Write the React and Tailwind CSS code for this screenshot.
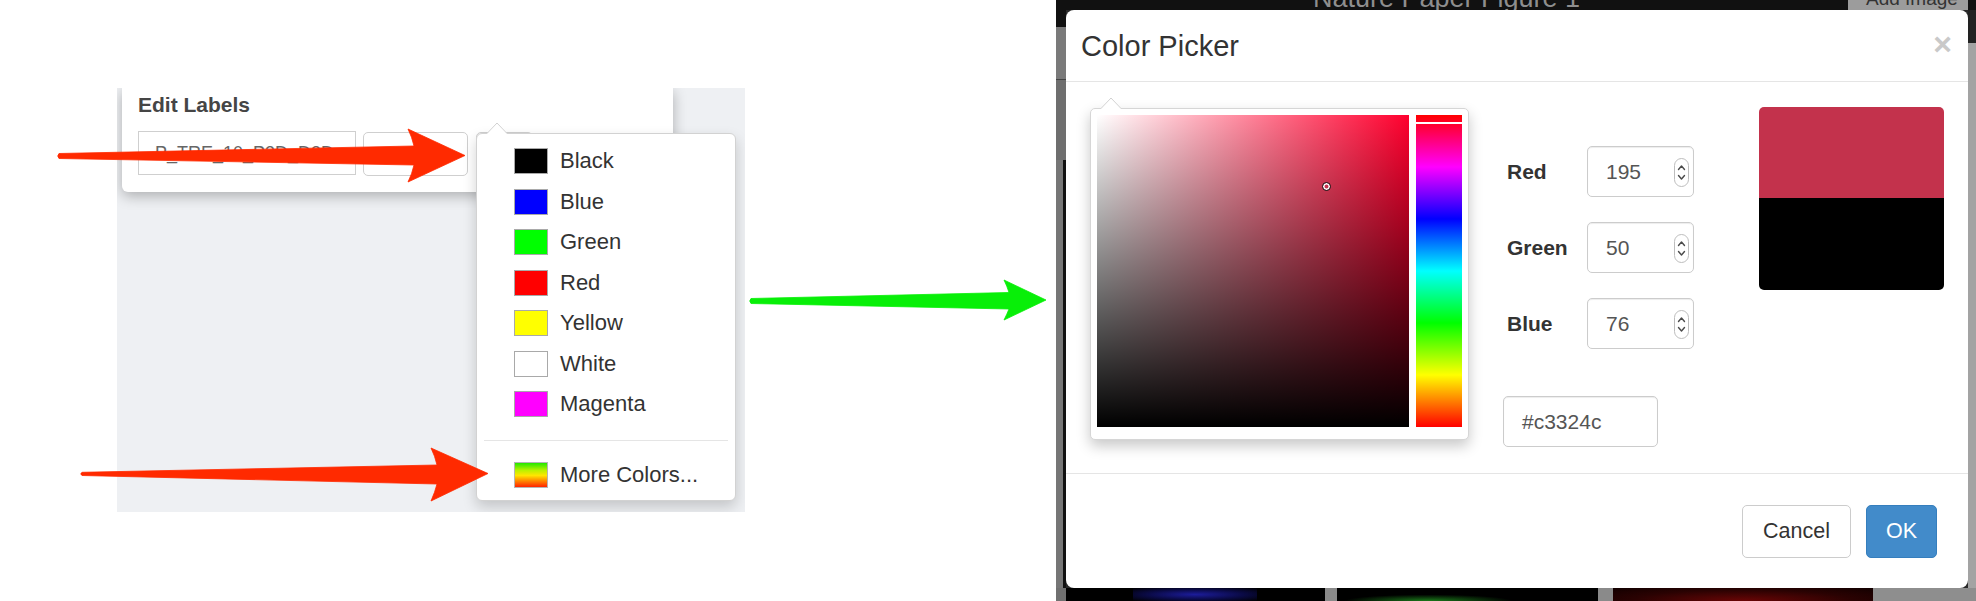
import React from "react";

const menuItems = [
  ["Black", "bg-[#000000]"],
  ["Blue", "bg-[#0000ff]"],
  ["Green", "bg-[#00ff00]"],
  ["Red", "bg-[#ff0000]"],
  ["Yellow", "bg-[#ffff00]"],
  ["White", "bg-white"],
  ["Magenta", "bg-[#ff00ff]"],
];

const rgbRows = [
  ["Red", "195"],
  ["Green", "50"],
  ["Blue", "76"],
];

function Spinner() {
  return (
    <svg width="17" height="29" viewBox="0 0 17 29">
      <rect x="1.5" y="0.5" width="14" height="28" rx="7" fill="#ffffff" stroke="#bdbdbd" />
      <path d="M5.5 11.5 L8.5 8 L11.5 11.5" fill="none" stroke="#4a4a4a" strokeWidth="1.4" strokeLinecap="round" strokeLinejoin="round" />
      <path d="M5.5 17.5 L8.5 21 L11.5 17.5" fill="none" stroke="#4a4a4a" strokeWidth="1.4" strokeLinecap="round" strokeLinejoin="round" />
    </svg>
  );
}

function Caret({ className }) {
  return (
    <svg className={className} width="22" height="13" viewBox="0 0 22 13">
      <path d="M0.5 12 L11 1 L21.5 12" fill="#ffffff" stroke="#d2d2d2" />
      <rect x="1.5" y="11.5" width="19" height="1.5" fill="#ffffff" />
    </svg>
  );
}

function LeftShot() {
  return (
    <div className="relative ml-[117px] mt-[88px] h-[424px] w-[628px] shrink-0 overflow-hidden bg-[#eef0f3]">
      <div className="ml-[5px] h-[104px] w-[551px] rounded-b-[6px] bg-white pl-[16px] shadow-[0_4px_14px_rgba(0,0,0,0.28)]">
        <div className="pt-[4px] text-[21px] font-bold leading-[25px] text-[#454545]">Edit Labels</div>
        <div className="mt-[14px] flex items-start">
          <div className="flex h-[44px] w-[218px] items-center border border-[#cfcfcf] pl-[16px] text-[18px] text-[#666666]">
            P_TRE_10_P3D_D3D
          </div>
          <div className="ml-[7px] mt-[1px] h-[44px] w-[105px] rounded-[5px] border border-[#cfcfcf]" />
          <div className="ml-[8px] mt-[1px] h-[44px] w-[57px] rounded-[5px] border border-[#cfcfcf]" />
        </div>
      </div>

      <div className="absolute left-[359px] top-[45px] h-[368px] w-[260px] rounded-[6px] border border-[#d2d2d2] bg-white pt-[7px] shadow-[0_6px_14px_rgba(0,0,0,0.18)]">
        <Caret className="absolute left-[9px] top-[-12px]" />
        {menuItems.map(([name, cls]) => (
          <div key={name} className="flex h-[40.5px] items-center pl-[37px]">
            <div className={`h-[26px] w-[34px] border border-[#a9a9a9] ${cls}`} />
            <div className="ml-[12px] text-[22px] leading-[26px] text-[#333333]">{name}</div>
          </div>
        ))}
        <div className="mx-[7px] mt-[15px] h-px bg-[#e5e5e5]" />
        <div className="mt-[14px] flex h-[40.5px] items-center pl-[37px]">
          <div className="h-[26px] w-[34px] border border-[#b5b5b5] bg-[linear-gradient(to_bottom,#22e800,#b8f200_30%,#ffe600_52%,#ff8a00_74%,#ff2400)]" />
          <div className="ml-[12px] text-[22px] leading-[26px] text-[#333333]">More Colors...</div>
        </div>
      </div>
    </div>
  );
}

function GreenArrow() {
  return (
    <svg className="mt-[276px] shrink-0" width="311" height="48" viewBox="0 0 311 48">
      <path
        d="M6 22.5 L264 16.5 Q262 10 259 4 L301 24 L259 44 Q262 38 264 33 L6 27.5 Q3.5 25 6 22.5 Z"
        fill="#08ef08"
        stroke="#08ef08"
        strokeWidth="0.8"
        strokeLinejoin="round"
      />
    </svg>
  );
}

function Modal() {
  return (
    <div className="flex h-[578px] w-[902px] shrink-0 flex-col overflow-hidden rounded-[8px] bg-white text-[#333333]">
      <div className="flex h-[72px] shrink-0 items-start justify-between border-b border-[#e5e5e5] pl-[15px] pr-[16px]">
        <div className="mt-[22px] text-[29px] leading-[29px]">Color Picker</div>
        <div className="mt-[18px] text-[32px] font-bold leading-[32px] text-[#c9c9c9]">×</div>
      </div>

      <div className="flex h-[391px] shrink-0 items-start">
        <div className="relative ml-[24px] mt-[26px] h-[332px] w-[379px] shrink-0 rounded-[5px] border border-[#d6d6d6] bg-white p-[6px] pb-[12px] shadow-[0_6px_14px_rgba(0,0,0,0.22)]">
          <Caret className="absolute left-[9px] top-[-12px]" />
          <div className="flex gap-[7px]">
            <div className="relative h-[312px] w-[312px] bg-[linear-gradient(to_right,#ffffff,#ff002e)]">
              <div className="absolute inset-0 bg-[linear-gradient(to_top,#000000,rgba(0,0,0,0))]" />
              <div className="absolute left-[225px] top-[67px] h-[9px] w-[9px] rounded-full border border-[#1a1a1a] shadow-[inset_0_0_0_1.5px_#ffffff]" />
            </div>
            <div className="relative h-[312px] w-[46px] bg-[linear-gradient(to_bottom,#ff0000_0%,#ff00ff_16.67%,#0000ff_33.33%,#00ffff_50%,#00ff00_66.67%,#ffff00_83.33%,#ff0000_100%)]">
              <div className="absolute left-0 right-0 top-[7px] h-[2px] bg-white" />
            </div>
          </div>
        </div>

        <div className="ml-[34px] mt-[64px] flex shrink-0 flex-col">
          {rgbRows.map(([label, value], i) => (
            <div key={label} className={i === 0 ? "flex items-center" : "mt-[25px] flex items-center"}>
              <div className="w-[84px] pl-[4px] text-[21px] font-bold text-[#333333]">{label}</div>
              <div className="relative flex h-[51px] w-[107px] items-center rounded-[5px] border border-[#cccccc] pl-[18px] text-[21px] text-[#555555] shadow-[inset_0_1px_1px_rgba(0,0,0,0.075)]">
                {value}
                <div className="absolute right-[3px] top-[11px] flex">
                  <Spinner />
                </div>
              </div>
            </div>
          ))}
          <div className="mt-[47px] flex h-[51px] w-[155px] items-center rounded-[5px] border border-[#cccccc] pl-[18px] text-[21px] text-[#555555] shadow-[inset_0_1px_1px_rgba(0,0,0,0.075)]">
            #c3324c
          </div>
        </div>

        <div className="ml-[65px] mt-[25px] flex h-[183px] w-[185px] shrink-0 flex-col overflow-hidden rounded-[5px]">
          <div className="h-[91px] bg-[#c3324c]" />
          <div className="flex-1 bg-black" />
        </div>
      </div>

      <div className="flex h-[115px] shrink-0 items-center justify-end gap-[15px] border-t border-[#e5e5e5] pr-[31px]">
        <div className="flex h-[53px] w-[109px] items-center justify-center rounded-[5px] border border-[#cccccc] bg-white text-[21.5px] text-[#333333]">
          Cancel
        </div>
        <div className="flex h-[53px] w-[71px] items-center justify-center rounded-[5px] border border-[#357ebd] bg-[#428bca] text-[21.5px] text-white">
          OK
        </div>
      </div>
    </div>
  );
}

function RightShot() {
  return (
    <div className="flex h-[601px] w-[920px] shrink-0 flex-col bg-[#2a2a2a]">
      <div className="flex h-[10px] shrink-0">
        <div className="h-[10px] w-[792px] overflow-hidden bg-[#111111]">
          <div className="ml-[257px] mt-[-15px] whitespace-nowrap text-[27px] leading-[27px] text-[#8e8e8e]">
            Nature Paper Figure 1
          </div>
        </div>
        <div className="h-[10px] w-[120px] overflow-hidden bg-[#9c9c9c]">
          <div className="ml-[18px] mt-[-11px] whitespace-nowrap text-[19px] leading-[19px] text-[#333333]">Add Image</div>
        </div>
        <div className="h-[10px] w-[8px] bg-[#111111]" />
      </div>

      <div className="flex h-[578px] shrink-0">
        <div className="flex w-[10px] shrink-0 flex-col">
          <div className="h-[17px] bg-[#111111]" />
          <div className="h-[53px] border-b border-[#444444] bg-[#7a7a7a]" />
          <div className="h-[80px] bg-[#6e6e6e]" />
          <div className="flex flex-1">
            <div className="w-[7px] bg-[#767676]" />
            <div className="w-[3px] bg-[#111111]" />
          </div>
        </div>
        <Modal />
        <div className="flex w-[8px] shrink-0 flex-col">
          <div className="h-[33px] bg-[#222222]" />
          <div className="flex-1 bg-[#a3a3a3]" />
        </div>
      </div>

      <div className="flex h-[13px] shrink-0">
        <div className="w-[10px] bg-[#707070]" />
        <div className="w-[67px] bg-black" />
        <div className="w-[124px] bg-[radial-gradient(ellipse_at_center,#1c1c9a_0%,#0a0a45_55%,#000000_100%)]" />
        <div className="w-[68px] bg-black" />
        <div className="w-[12px] bg-[#8a8a8a]" />
        <div className="w-[261px] bg-[radial-gradient(ellipse_at_35%_100%,#1a7a1a_0%,#000000_35%)]" />
        <div className="w-[15px] bg-[#8a8a8a]" />
        <div className="w-[260px] bg-[radial-gradient(ellipse_at_50%_100%,#6a0505_0%,#2a0202_60%,#120000_100%)]" />
        <div className="w-[103px] bg-[#8e8e8e]" />
      </div>
    </div>
  );
}

export default function App() {
  return (
    <div className="relative flex h-[601px] w-[1976px] items-start overflow-hidden bg-white font-['Liberation_Sans',Arial,Helvetica,sans-serif]">
      <LeftShot />
      <GreenArrow />
      <RightShot />
      <svg className="pointer-events-none absolute left-0 top-0" width="1976" height="601" viewBox="0 0 1976 601">
        <path
          d="M59 153.5 L414 146 Q412 137 408 129 L465 155.5 L408 182 Q412 174 414 165 L59 158.5 Q56.5 156 59 153.5 Z"
          fill="#ff2a00"
          stroke="#ff2a00"
          strokeWidth="0.8"
          strokeLinejoin="round"
        />
        <path
          d="M82 472.3 L437 465 Q435 456 431 448 L488 473.5 L431 501 Q435 492 437 484 L82 475.5 Q79.5 474 82 472.3 Z"
          fill="#ff2a00"
          stroke="#ff2a00"
          strokeWidth="0.8"
          strokeLinejoin="round"
        />
      </svg>
    </div>
  );
}
